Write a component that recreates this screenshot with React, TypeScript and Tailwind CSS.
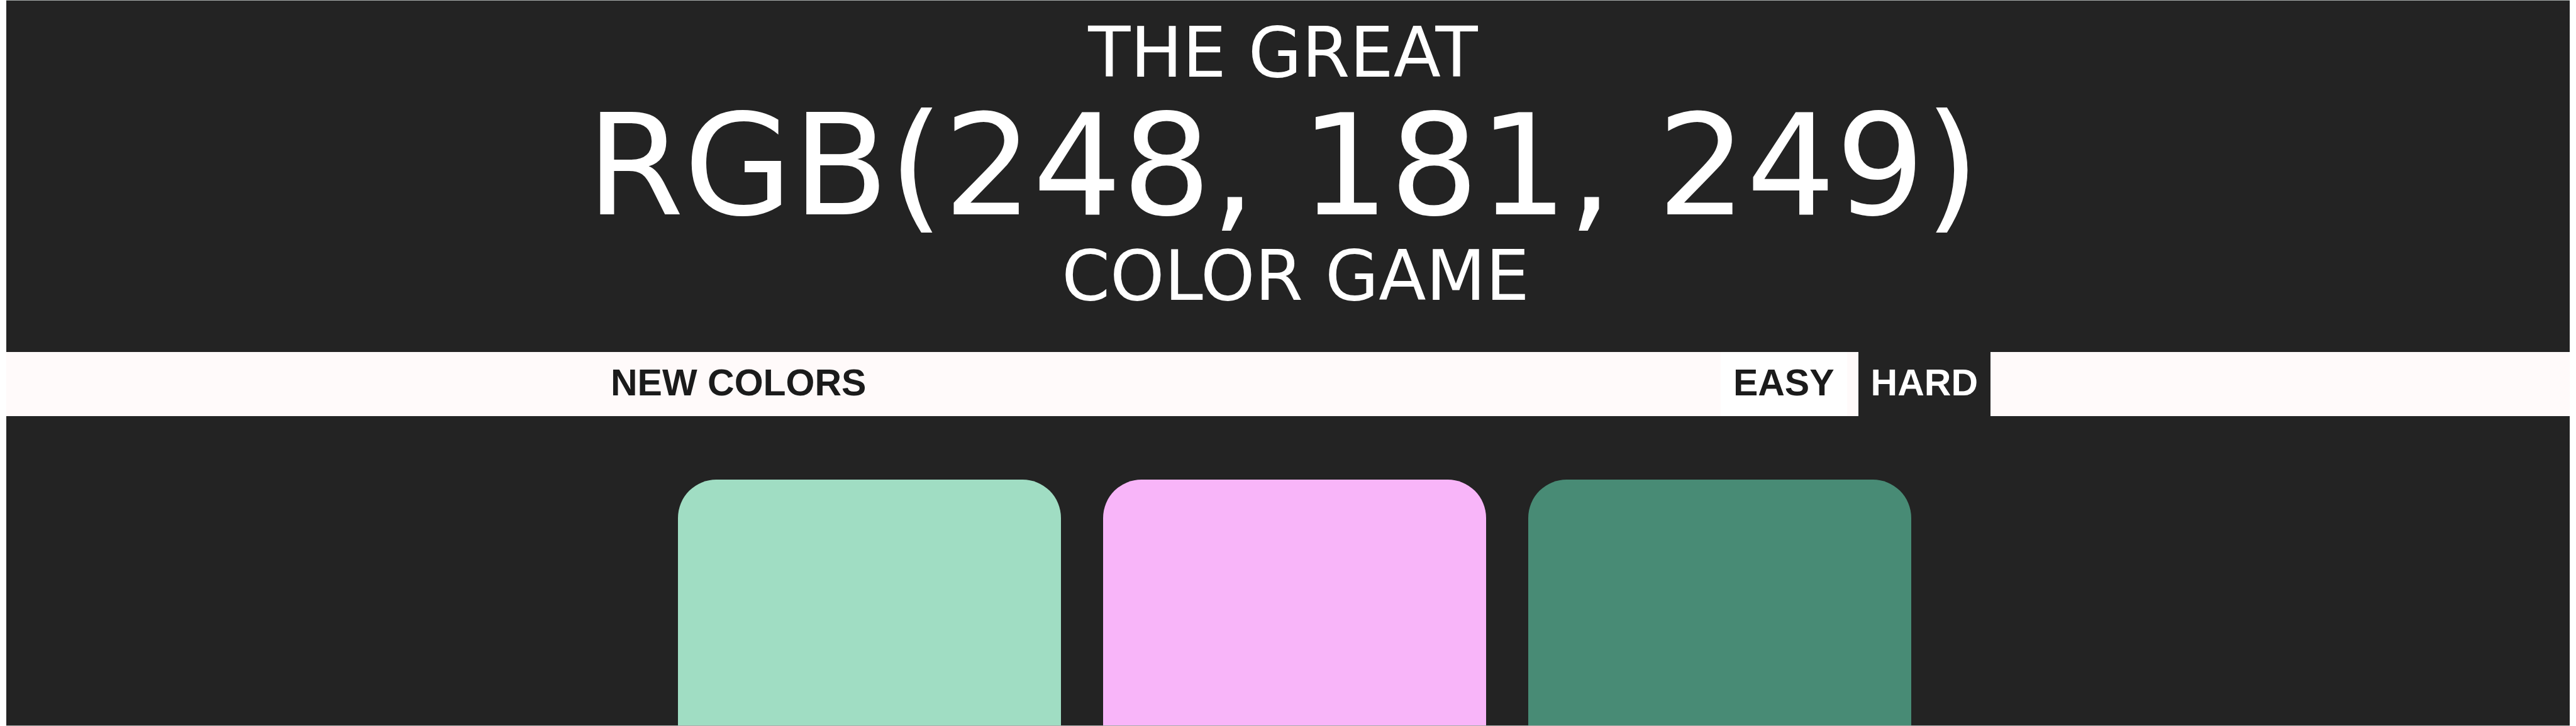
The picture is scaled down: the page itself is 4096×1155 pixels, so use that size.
import { useState } from "react";

type Level = "easy" | "hard";

const squares = [
  { name: "rgb(160, 221, 195)", fill: "bg-[#a0ddc3]" },
  { name: "rgb(248, 181, 249)", fill: "bg-[#f8b5f9]" },
  { name: "rgb(72, 139, 117)", fill: "bg-[#488b75]" },
];

const buttonBase = "h-full px-5 pb-1 text-[59px] leading-none font-bold uppercase";

function Header() {
  return (
    <h1 className="flex flex-col items-center pt-7 pr-4 pb-[66px] font-['DejaVu_Sans',Verdana,sans-serif] text-[110px] leading-none font-normal whitespace-nowrap text-white uppercase">
      <span>The Great</span>
      <span className="mt-3.5 text-[223px]">RGB(248, 181, 249)</span>
      <span className="mt-2 pl-10">Color Game</span>
    </h1>
  );
}

function Toolbar() {
  const [level, setLevel] = useState<Level>("hard");
  const levelStyle = (value: Level) =>
    level === value ? "bg-[#232323] text-white" : "bg-white text-[#1b1b1b]";

  return (
    <nav className="flex h-[102px] shrink-0 justify-center bg-[#fffafa] pl-5 font-['Liberation_Sans',Arial,sans-serif]">
      <div className="flex w-full max-w-[2214px] items-center justify-between">
        <button type="button" className={`${buttonBase} text-[#1b1b1b]`}>
          New Colors
        </button>
        <div className="flex h-full gap-[18px]">
          <button
            type="button"
            aria-pressed={level === "easy"}
            onClick={() => setLevel("easy")}
            className={`${buttonBase} ${levelStyle("easy")}`}
          >
            Easy
          </button>
          <button
            type="button"
            aria-pressed={level === "hard"}
            onClick={() => setLevel("hard")}
            className={`${buttonBase} ${levelStyle("hard")}`}
          >
            Hard
          </button>
        </div>
      </div>
    </nav>
  );
}

export default function App() {
  return (
    <div className="h-screen bg-white px-[10px]">
      <div className="flex h-full flex-col overflow-hidden border-y border-[#a9adab] bg-[#232323]">
        <Header />
        <Toolbar />
        <main className="flex items-start justify-center pt-[101px] pl-5">
          <div className="grid w-full max-w-[1961px] grid-cols-3 gap-[67px]">
            {squares.map((square) => (
              <button
                key={square.name}
                type="button"
                aria-label={square.name}
                className={`aspect-square rounded-[61px] ${square.fill}`}
              />
            ))}
          </div>
        </main>
      </div>
    </div>
  );
}
